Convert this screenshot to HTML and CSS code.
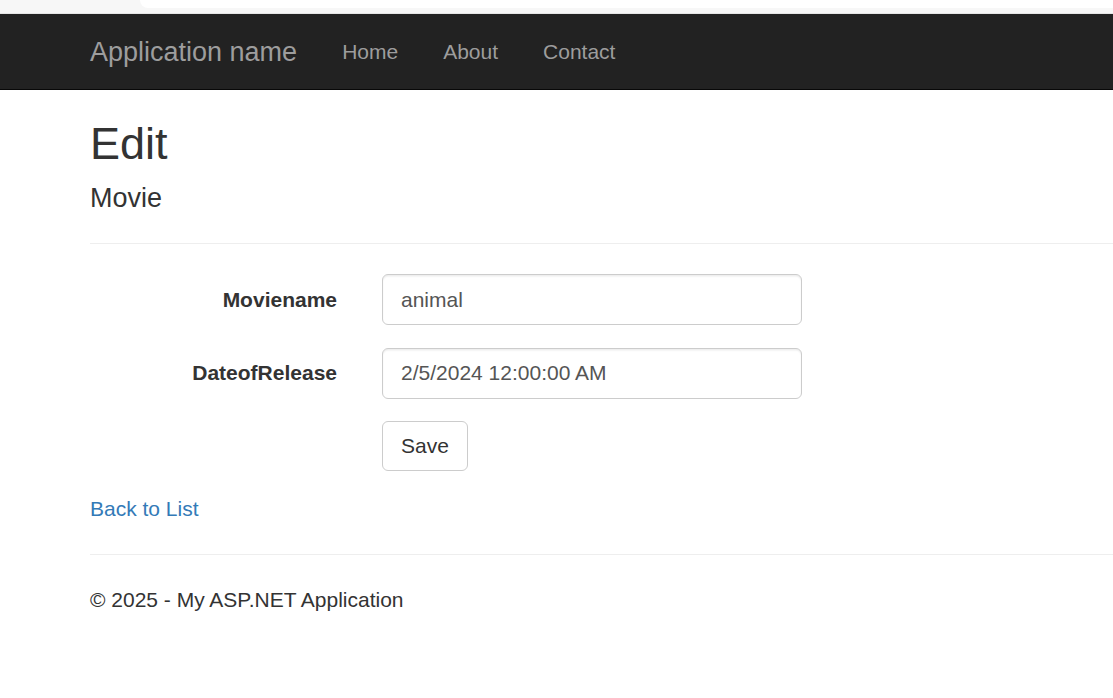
FILE: index.html
```html
<!DOCTYPE html>
<html lang="en">
<head>
<meta charset="utf-8">
<title>Edit - My ASP.NET Application</title>
<link rel="stylesheet" href="styles.css">
</head>
<body>
<div class="topstrip">
  <div class="topstrip-gap"></div>
  <div class="topstrip-box"></div>
</div>
<nav class="navbar">
  <div class="navbar-inner">
    <a class="brand" href="#">Application name</a>
    <ul class="nav">
      <li><a href="#">Home</a></li>
      <li><a href="#">About</a></li>
      <li><a href="#">Contact</a></li>
    </ul>
  </div>
</nav>
<main class="content">
  <h2 class="title">Edit</h2>
  <h4 class="subtitle">Movie</h4>
  <hr class="rule">
  <form class="form">
    <div class="form-group">
      <label class="form-label" for="name">Moviename</label>
      <input class="form-control" id="name" type="text" value="animal">
    </div>
    <div class="form-group">
      <label class="form-label" for="date">DateofRelease</label>
      <input class="form-control" id="date" type="text" value="2/5/2024 12:00:00 AM">
    </div>
    <div class="form-group">
      <span class="form-label"></span>
      <button class="btn" type="button">Save</button>
    </div>
  </form>
  <div class="back"><a href="#">Back to List</a></div>
  <hr class="rule">
  <footer class="footer">
    <p>&copy; 2025 - My ASP.NET Application</p>
  </footer>
</main>
</body>
</html>
```

FILE: styles.css
```css
html, body {
  margin: 0;
  padding: 0;
}
body {
  font-family: "Liberation Sans", Arial, sans-serif;
  font-size: 21px;
  line-height: 30px;
  color: #333;
  background: #fff;
  overflow: hidden;
}
.topstrip {
  height: 14px;
  background: #f7f7f7;
  display: flex;
  box-sizing: border-box;
  border-bottom: 1px solid #e6e6e6;
}
.topstrip-gap {
  width: 140px;
  flex: none;
}
.topstrip-box {
  flex: 1;
  height: 8px;
  background: #fff;
  border-bottom-left-radius: 14px;
}
.navbar {
  background: #222;
  border-bottom: 1px solid #080808;
  height: 75px;
}
.navbar-inner {
  display: flex;
  align-items: center;
  height: 75px;
  padding-left: 90px;
}
.brand {
  color: #9d9d9d;
  font-size: 27px;
  line-height: 30px;
  text-decoration: none;
  padding: 22.5px 22.5px 22.5px 0;
}
.nav {
  display: flex;
  list-style: none;
  margin: 0;
  padding: 0;
}
.nav a {
  display: block;
  color: #9d9d9d;
  text-decoration: none;
  font-size: 21px;
  line-height: 30px;
  padding: 22.5px;
}
.content {
  padding-left: 90px;
  padding-top: 0;
}
.title {
  font-size: 45px;
  font-weight: 500;
  line-height: 1.1;
  margin: 29px 0 15px;
}
.subtitle {
  font-size: 27px;
  font-weight: 500;
  line-height: 1.1;
  margin: 15px 0 15px;
}
.rule {
  border: 0;
  border-top: 1px solid #eee;
  margin: 30px 0;
}
.form {
  margin: 0;
}
.form-group {
  display: flex;
  align-items: flex-start;
  margin-bottom: 22.5px;
}
.form-label {
  width: 247px;
  flex: none;
  margin-right: 45px;
  text-align: right;
  font-weight: bold;
  padding-top: 10.5px;
  line-height: 30px;
}
.form-control {
  box-sizing: border-box;
  width: 420px;
  height: 51px;
  padding: 9px 18px;
  font-family: inherit;
  font-size: 21px;
  line-height: 30px;
  color: #555;
  background: #fff;
  border: 1.5px solid #ccc;
  border-radius: 6px;
  box-shadow: inset 0 1.5px 1.5px rgba(0, 0, 0, 0.075);
  margin: 0;
  outline: none;
}
.btn {
  box-sizing: border-box;
  height: 50px;
  padding: 9px 18px;
  font-family: inherit;
  font-size: 21px;
  line-height: 30px;
  color: #333;
  background: #fff;
  border: 1.5px solid #ccc;
  border-radius: 6px;
  margin: 0;
  cursor: pointer;
}
.back a {
  color: #337ab7;
  text-decoration: none;
}
.footer p {
  margin: 0 0 15px;
}
```
